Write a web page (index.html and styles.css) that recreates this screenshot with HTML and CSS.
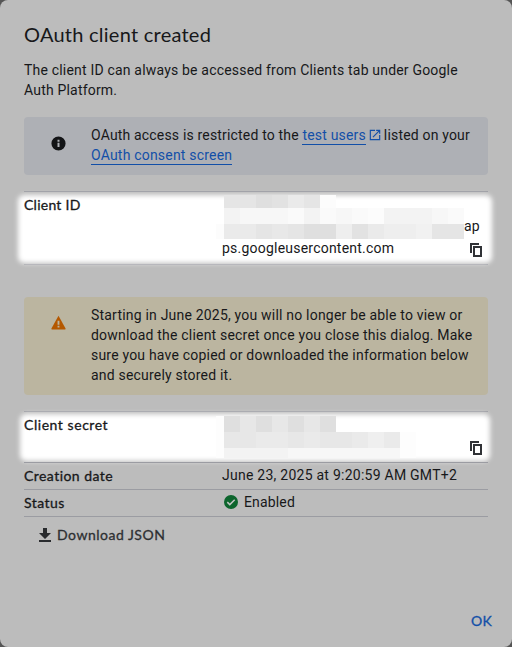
FILE: index.html
```html
<!DOCTYPE html>
<html lang="en">
<head>
<meta charset="utf-8">
<title>OAuth client created</title>
<link rel="stylesheet" href="styles.css">
</head>
<body>
<main class="dialog">
  <h1 class="title">OAuth client created</h1>
  <p class="intro">The client ID can always be accessed from Clients tab under Google<br>Auth Platform.</p>

  <section class="notice info">
    <svg class="notice-icon" viewBox="0 0 24 24"><path fill="#131416" fill-rule="evenodd" d="M12 2a10 10 0 1 0 0 20 10 10 0 0 0 0-20zM13.400 17h-2.800v-6h2.800zM13.400 9.400h-2.800V6.700h2.800z"/></svg>
    <p>OAuth access is restricted to the <a>test users</a><svg class="external" viewBox="0 0 24 24"><path fill="#124fa8" d="M19 19H5V5h7V3H3v18h18v-9h-2zM14 3v2h3.600l-9.800 9.800 1.400 1.400L19 6.400V10h2V3z"/></svg>listed on your<br><a class="consent">OAuth consent screen</a></p>
  </section>

  <dl class="row client-id">
    <dt>Client ID</dt>
    <dd>
      <svg class="mosaic" width="248" height="44" viewBox="0 0 248 44" shape-rendering="crispEdges">
        <path fill="#fcfcfc" d="M0 29h8v15H0zM104 0h16v13h-16zM152 13h16v16h-16z"/>
        <path fill="#e5e5e5" d="M8 0h32v13H8zM88 0h16v13H88zM40 29h16v15H40zM72 29h16v15H72zM216 29h32v15h-32z"/>
        <path fill="#dfdfdf" d="M40 0h16v13H40zM88 29h32v15H88z"/>
        <path fill="#e2e2e2" d="M56 0h16v13H56zM136 29h16v15h-16z"/>
        <path fill="#eaeaea" d="M72 0h16v13H72zM8 29h32v15H8zM152 29h16v15h-16z"/>
        <path fill="#e8e8e8" d="M56 29h16v15H56z"/>
        <path fill="#f3f3f3" d="M8 13h16v16H8zM88 13h16v16H88zM168 13h48v16h-48z"/>
        <path fill="#f7f7f7" d="M24 13h48v16H24zM120 13h16v16h-16zM216 13h16v16h-16z"/>
        <path fill="#fafafa" d="M72 13h16v16H72zM104 13h16v16h-16zM136 13h16v16h-16zM232 13h16v16h-16z"/>
        <path fill="#eee" d="M120 29h16v15h-16zM168 29h32v15h-32z"/>
        <path fill="#f1f1f1" d="M200 29h16v15h-16z"/>
      </svg><span class="tail">ap</span>
      <div class="value-line"><span>ps.googleusercontent.com</span><svg class="copy" viewBox="0 0 14 15"><path d="M1 10V1h8M4 4h7v9H4z" fill="none" stroke="#303236" stroke-width="2"/></svg></div>
    </dd>
  </dl>

  <section class="notice warning">
    <svg class="notice-icon" viewBox="0 0 24 24"><path fill="#b45800" d="M12 2.500 2 20.500q-.5 1.500 1 1.500h18q1.500 0 1-1.500z"/><path fill="#bbb5a0" d="M10.700 9.500h2.600v5.500h-2.600zM10.700 16.500h2.600v2.500h-2.600z"/></svg>
    <p>Starting in June 2025, you will no longer be able to view or<br>download the client secret once you close this dialog. Make<br>sure you have copied or downloaded the information below<br>and securely stored it.</p>
  </section>

  <dl class="row client-secret">
    <dt>Client secret</dt>
    <dd>
      <svg class="mosaic" width="200" height="42" viewBox="0 0 200 42" shape-rendering="crispEdges">
        <path fill="#dfdfdf" d="M8 0h16v16H8zM40 0h16v16H40zM72 0h16v16H72zM104 0h16v16h-16z"/>
        <path fill="#e7e7e7" d="M24 0h16v16H24zM56 0h16v16H56zM88 0h16v16H88zM8 16h32v16H8zM72 16h16v16H72zM104 16h32v16h-32z"/>
        <path fill="#eaeaea" d="M40 16h32v16H40zM88 16h16v16H88zM136 16h16v16h-16zM168 16h16v16h-16z"/>
        <path fill="#efefef" d="M152 16h16v16h-16z"/>
        <path fill="#f3f3f3" d="M8 32h64v10H8z"/>
        <path fill="#f7f7f7" d="M72 32h112v10H72z"/>
        <path fill="#fdfdfd" d="M0 0h8v42H0zM184 16h16v26h-16z"/>
      </svg>
      <svg class="copy" viewBox="0 0 14 15"><path d="M1 10V1h8M4 4h7v9H4z" fill="none" stroke="#303236" stroke-width="2"/></svg>
    </dd>
  </dl>
  <dl class="row compact">
    <dt>Creation date</dt>
    <dd>June 23, 2025 at 9:20:59 AM GMT+2</dd>
  </dl>
  <dl class="row compact last">
    <dt>Status</dt>
    <dd class="status"><svg class="check" viewBox="0 0 14 14"><circle cx="7" cy="7" r="7" fill="#0d652d"/><path d="m3.300 7.100 2.500 2.500 4.900-4.900" fill="none" stroke="#c4c4c4" stroke-width="1.500"/></svg>Enabled</dd>
  </dl>
  <div class="download">
    <svg viewBox="0 0 12 14"><path fill="#292b2e" d="M4 0h4v5h4l-6 6-6-6h4zM0 12h12v2H0z"/></svg>
    <span>Download JSON</span>
  </div>
  <footer>OK</footer>
</main>
</body>
</html>
```
FILE: styles.css
```css
* { box-sizing: border-box; }
body { margin: 0; background: #555; font: 14px/20px Roboto, sans-serif; letter-spacing: .2px; color: #17181a; }
.dialog { display: flex; flex-direction: column; width: 512px; height: 647px; padding: 19px 24px 0; background: #bcbcbc; border-radius: 8px; overflow: hidden; white-space: nowrap; }
h1, p, dl, dd { margin: 0; }
.title { font: 400 20px/30px Lato, sans-serif; letter-spacing: .25px; }
.intro { margin-top: 11px; letter-spacing: .19px; }
.notice { display: flex; border-radius: 4px; }
.info { height: 58px; margin-top: 17px; padding-top: 8px; background: #aeb0b5; letter-spacing: .175px; }
.consent { letter-spacing: .2px; }
.warning { height: 98px; margin-top: 32px; padding-top: 8px; background: #bbb5a0; }
.notice-icon { flex: none; width: 17px; height: 17px; margin: 9.500px 24.500px 0 25.500px; }
.warning .notice-icon { margin-top: 9px; }
.notice a { display: inline-block; height: 20px; border-bottom: 1px solid #124fa8; color: #124fa8; vertical-align: top; }
.external { width: 14px; height: 14px; margin: 0 2px 0 2px; vertical-align: -2px; }
.row { position: relative; z-index: 0; display: grid; grid-template-columns: 198px 266px; border-top: 1px solid #9b9ca2; }
dt, .download, footer { font: 400 14px/20px Lato, sans-serif; letter-spacing: .45px; -webkit-text-stroke: .3px currentColor; }
.client-id { height: 74px; margin-top: 16px; border-bottom: 1px solid #9b9ca2; }
.client-id::before, .client-secret::before { content: ""; position: absolute; z-index: -1; background: #fff; border-radius: 6px; filter: blur(2.500px); }
.client-id::before { inset: 3px -4px 1px -6px; }
.client-secret::before { inset: 2px -2px 1px -4px; }
dt { padding-top: 3px; }
.client-id dt { letter-spacing: .25px; }
.client-secret dt { letter-spacing: .55px; }
.mosaic { display: inline-block; flex: none; vertical-align: top; }
.client-id .mosaic { margin: 3px 0 0 -6px; }
.client-id dd { height: 72px; letter-spacing: .22px; }
.tail { display: inline-block; padding-top: 24px; vertical-align: top; }
.value-line { display: flex; justify-content: space-between; height: 20px; margin-top: -1px; }
.copy { width: 14px; height: 15px; margin: 5px 4px 0 0; }
.client-secret { height: 51px; margin-top: 16px; }
.client-secret dd { display: flex; justify-content: space-between; }
.client-secret .mosaic { margin: 4px 0 0 -6px; }
.client-secret .copy { margin-top: 29px; }
.compact { height: 27px; }
.compact dd { padding-top: 2px; letter-spacing: .25px; }
.last { height: 28px; border-bottom: 1px solid #9b9ca2; }
.compact .status { display: flex; align-items: center; height: 24px; padding: 0 0 0 2px; letter-spacing: .15px; }
.check { width: 14px; height: 14px; margin-right: 6px; }
.download { display: flex; align-items: center; height: 20px; margin: 8px 0 0 15px; color: #2d2f32; letter-spacing: .5px; }
.download svg { width: 12px; height: 14px; margin-right: 6px; }
footer { align-self: flex-end; margin: 66px -4px 0 0; color: #124fa8; letter-spacing: .2px; }
```
